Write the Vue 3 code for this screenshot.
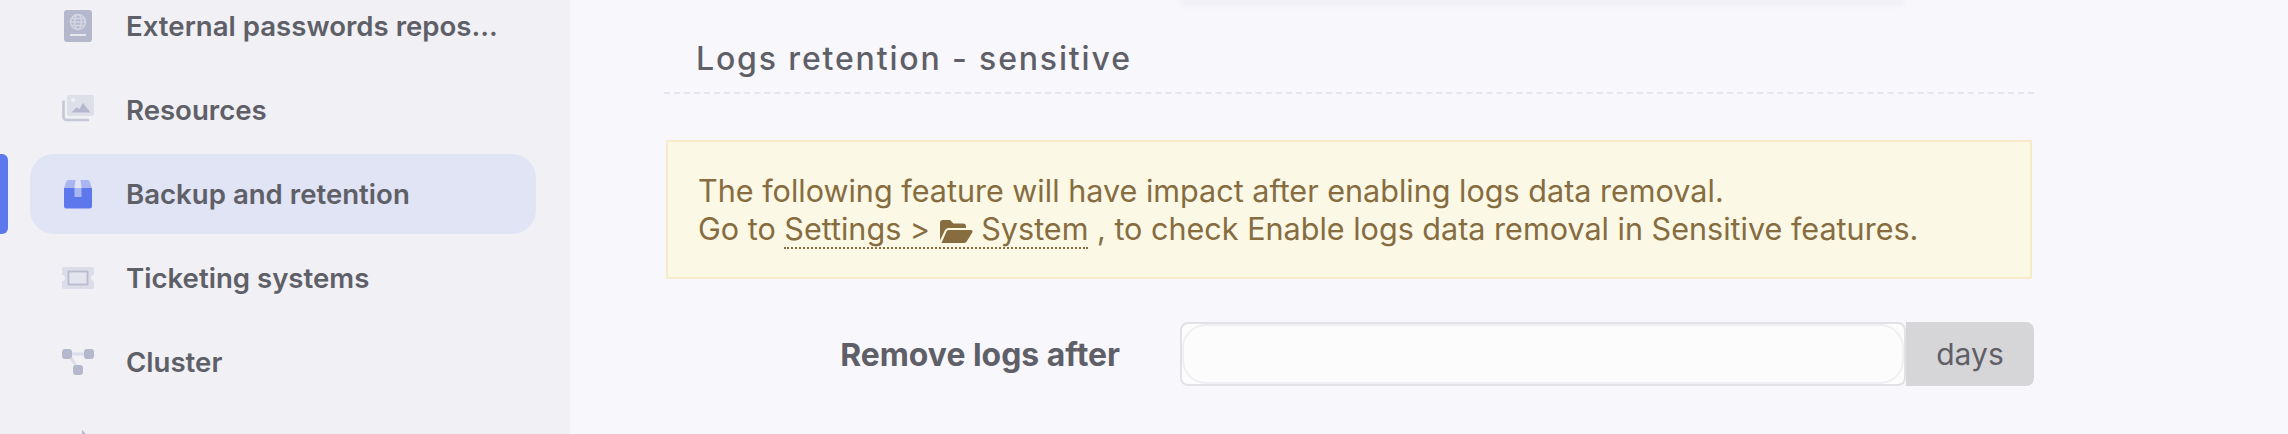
<script setup>
const items = [
  { key: 'passport', label: 'External passwords repos...' },
  { key: 'resources', label: 'Resources' },
  { key: 'backup', label: 'Backup and retention', active: true },
  { key: 'ticket', label: 'Ticketing systems' },
  { key: 'cluster', label: 'Cluster' },
  { key: 'more', label: '' },
]
</script>

<template>
  <div class="page">
    <aside class="sidebar">
      <div
        v-for="item in items"
        :key="item.key"
        class="item"
        :class="{ active: item.active }"
      >
        <span class="icon">
          <svg v-if="item.key === 'passport'" viewBox="0 0 32 32" width="32" height="32">
            <rect x="2" y="0" width="28" height="32" rx="3" fill="#b5b8cc" />
            <g fill="none" stroke="#d3d5e2" stroke-width="1.6">
              <circle cx="16" cy="12" r="7.5" />
              <ellipse cx="16" cy="12" rx="3.4" ry="7.5" />
              <path d="M8.5 12h15M9.5 8.5h13M9.5 15.5h13" />
            </g>
            <rect x="8" y="24" width="16" height="2" fill="#e6e7ef" />
          </svg>
          <svg v-else-if="item.key === 'resources'" viewBox="0 0 32 32" width="32" height="32">
            <path d="M1.500 7.500V23a3 3 0 0 0 3 3H26" fill="none" stroke="#c5c8d8" stroke-width="2.600" stroke-linecap="round" />
            <rect x="5" y="1" width="27" height="21" rx="2.500" fill="#dddfe9" />
            <circle cx="11" cy="6" r="2.100" fill="#f0f0f5" />
            <path d="M9.500 18.500l5.200-5.200 2.400 2 4-6.300 7.400 9.500z" fill="#b5b8cc" />
          </svg>
          <svg v-else-if="item.key === 'backup'" viewBox="0 0 32 32" width="32" height="32">
            <path d="M6 2h7.500l-1 8H2.200L4 4.200A3 3 0 0 1 6 2zM18.500 2H26a3 3 0 0 1 2 2.200L29.800 10H19.500z" fill="#aab6f1" />
            <path d="M2 10h11v9h6v-9h11v18a2.500 2.500 0 0 1-2.500 2.500h-23A2.500 2.500 0 0 1 2 28z" fill="#5d78ec" />
            <rect x="12.500" y="10" width="7" height="9" fill="#aab6f1" />
          </svg>
          <svg v-else-if="item.key === 'ticket'" viewBox="0 0 32 32" width="32" height="32">
            <path d="M2 5h28a2 2 0 0 1 2 2v6a3 3 0 0 0 0 6v6a2 2 0 0 1-2 2H2a2 2 0 0 1-2-2v-6a3 3 0 0 0 0-6V7a2 2 0 0 1 2-2z" fill="#dcdde8" />
            <rect x="6.500" y="9.500" width="19" height="13" fill="#e3e4ed" stroke="#b9bccf" stroke-width="1.800" />
          </svg>
          <svg v-else-if="item.key === 'cluster'" viewBox="0 0 32 32" width="32" height="32">
            <path d="M8 8h16M8 10l7 12" fill="none" stroke="#dcdde8" stroke-width="3" />
            <rect x="0" y="3" width="10" height="10" rx="3" fill="#b5b8cc" />
            <rect x="22" y="3" width="10" height="10" rx="3" fill="#b5b8cc" />
            <rect x="11" y="19" width="10" height="10" rx="3" fill="#b5b8cc" />
          </svg>
          <svg v-else viewBox="0 0 32 32" width="32" height="32">
            <path d="M20 0l10 10v14H20z" fill="#b5b8cc" />
          </svg>
        </span>
        <span class="label">{{ item.label }}</span>
      </div>
    </aside>

    <main class="main">
      <div class="prev-card"></div>
      <div class="content">
        <h2 class="title">Logs retention - sensitive</h2>
        <div class="alert">
          <div>The following feature will have impact after enabling logs data removal.</div>
          <div>
            Go to
            <span class="link">Settings &gt;
              <svg class="folder" viewBox="0 0 34 24" width="34" height="24">
                <path d="M1 4a3 3 0 0 1 3-3h7l3.500 3.500H24a3 3 0 0 1 3 3V9H9.500a4 4 0 0 0-3.700 2.500L1 21.500z" fill="#866c3f" />
                <path d="M9.500 11H32a1.500 1.500 0 0 1 1.400 2.200L28 22a3.500 3.500 0 0 1-3 2H2.500l5-11.500a2 2 0 0 1 2-1.500z" fill="#866c3f" />
              </svg>
              System</span>
            , to check Enable logs data removal in Sensitive features.
          </div>
        </div>
        <div class="row">
          <label class="row-label">Remove logs after</label>
          <div class="group">
            <div class="input"><div class="input-inner"></div></div>
            <div class="addon">days</div>
          </div>
        </div>
      </div>
    </main>
  </div>
</template>

<style scoped>
.page {
  display: flex;
  width: 2288px;
  height: 434px;
  overflow: hidden;
  font-family: Inter, "Noto Sans", sans-serif;
  background: #f7f7fc;
}
.sidebar {
  position: relative;
  flex: 0 0 570px;
  background: #f0f0f5;
  padding: 0 34px 0 30px;
  margin-top: -14px;
  height: 460px;
  display: flex;
  flex-direction: column;
  gap: 4px;
  box-sizing: border-box;
}
.item {
  position: relative;
  flex: 0 0 80px;
  display: flex;
  align-items: center;
  gap: 32px;
  padding-left: 32px;
  border-radius: 24px;
  font-size: 27.6px;
  font-weight: 600;
  color: #5f5f68;
}
.item.active {
  background: #e0e4f4;
}
.item.active::before {
  content: "";
  position: absolute;
  left: -30px;
  top: 0;
  width: 8px;
  height: 80px;
  background: #5d78ec;
  border-radius: 0 6px 6px 0;
}
.icon {
  display: flex;
  width: 32px;
  height: 32px;
}
.main {
  position: relative;
  flex: 1;
  min-width: 0;
}
.prev-card {
  width: 724px;
  height: 1px;
  margin: -1px 0 0 610px;
  box-shadow: 0 3px 6px rgba(60, 60, 80, 0.26);
}
.content {
  width: 1370px;
  margin-left: 94px;
}
.title {
  margin: 0;
  height: 94px;
  padding: 39px 0 0 32px;
  box-sizing: border-box;
  border-bottom: 2px dashed #e6e6ee;
  font-size: 32px;
  line-height: 40px;
  font-weight: 500;
  letter-spacing: 1.85px;
  color: #5f5f68;
}
.alert {
  box-sizing: border-box;
  margin: 46px 2px 0 2px;
  height: 139px;
  padding: 29.500px 30px 0;
  background: #fbf8e6;
  border: 2px solid #f8ebcc;
  font-size: 30.55px;
  line-height: 38px;
  color: #866c3f;
}
.link {
  border-bottom: 2px dotted #866c3f;
}
.folder {
  vertical-align: -3px;
}
.row {
  display: flex;
  align-items: center;
  margin-top: 43px;
}
.row-label {
  width: 456px;
  text-align: right;
  font-size: 31.9px;
  font-weight: 700;
  color: #5f5f68;
}
.group {
  display: flex;
  margin-left: 60px;
  height: 64px;
}
.input {
  box-sizing: border-box;
  width: 726px;
  background: #fcfcfd;
  border: 2px solid #e2e2e6;
  border-radius: 8px;
}
.input-inner {
  box-sizing: border-box;
  height: 100%;
  border: 2px solid #f0f0f4;
  border-radius: 24px;
}
.addon {
  width: 128px;
  display: flex;
  align-items: center;
  justify-content: center;
  background: #d6d6d8;
  border-radius: 0 8px 8px 0;
  font-size: 30px;
  color: #5f5f68;
}
</style>
